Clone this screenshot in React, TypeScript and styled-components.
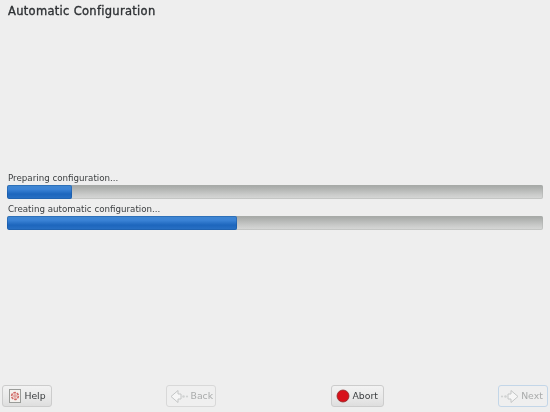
import React from 'react';
import styled, { createGlobalStyle } from 'styled-components';

const GlobalStyle = createGlobalStyle`
  html, body {
    margin: 0;
    padding: 0;
    background: #eeeeee;
  }
`;

const Screen = styled.div`
  width: 550px;
  height: 412px;
  display: flex;
  flex-direction: column;
  box-sizing: border-box;
  overflow: hidden;
  background: #eeeeee;
  font-family: "DejaVu Sans", sans-serif;
  color: #2e3436;
  filter: blur(0.3px);
`;

const Title = styled.h1`
  margin: 0;
  padding: 4px 0 0 8px;
  height: 20px;
  font-size: 11.5px;
  line-height: 15px;
  font-weight: 400;
  letter-spacing: 0.3px;
  -webkit-text-stroke: 0.35px #2e3134;
  color: #2e3134;
`;

const Content = styled.div`
  flex: 1;
  display: flex;
  flex-direction: column;
  justify-content: center;
  padding: 0 7px 0 7px;
  margin-bottom: 5px;
`;

const Label = styled.div`
  font-size: 8.7px;
  line-height: 14px;
  height: 13px;
  padding-left: 1px;
  color: #3a3d3f;
`;

const Track = styled.div`
  height: 14px;
  margin: 1px 0 3px;
  border-radius: 2px;
  overflow: hidden;
  background: linear-gradient(#a3a6a4, #b4b6b4 30%, #cbcccb 70%, #d8d9d8);
  box-shadow: inset 0 0 0 1px rgba(170, 172, 170, 0.4);
`;

const Fill = styled.div`
  height: 100%;
  border-radius: 2px;
  background: linear-gradient(#3f86cf, #3b83d6 30%, #1d66bd 65%, #2a71c4);
  box-shadow: inset 0 0 0 1px rgba(20, 80, 150, 0.4);
`;

const Footer = styled.div`
  display: flex;
  justify-content: space-between;
  align-items: center;
  height: 22px;
  padding: 0 2px;
  margin-bottom: 5px;
`;

const Button = styled.div<{ $disabled?: boolean; $focused?: boolean; $width: number; $endPad?: number }>`
  width: ${p => p.$width}px;
  height: 22px;
  box-sizing: border-box;
  display: flex;
  align-items: center;
  justify-content: center;
  gap: 2px;
  padding-right: ${p => p.$endPad ?? 0}px;
  font-size: 9.3px;
  border-radius: 3px;
  border: 1px solid ${p => (p.$focused ? '#c3d6e8' : p.$disabled ? '#d8d8d8' : '#cccccc')};
  color: ${p => (p.$disabled ? '#a9abab' : '#3a3d3f')};
  background: ${p =>
    p.$disabled ? '#efefef' : 'linear-gradient(#f2f2f2, #e8e8e8 60%, #dedede)'};
`;

const ButtonText = styled.span`
  margin-bottom: 1px;
`;

const HelpIcon = () => (
  <svg width="14" height="16" viewBox="0 0 14 16">
    <rect x="1.5" y="1.5" width="11" height="13" fill="#f4f1ee" stroke="#9a9c99" />
    <circle cx="7" cy="8" r="3.4" fill="#f0d8d4" stroke="#d06a66" strokeWidth="1.5" strokeDasharray="2.5 1" />
    <circle cx="7" cy="8" r="1.2" fill="#f4e4e0" stroke="#c75a55" strokeWidth="0.6" />
  </svg>
);

const BackIcon = () => (
  <svg width="19" height="15" viewBox="0 0 19 15">
    <path d="M1 7.5 L8 1.5 V5 H11 V10 H8 V13.5 Z" fill="#f6f6f6" stroke="#c4c6c6" />
    <circle cx="13.5" cy="7.5" r="1.3" fill="#d0d2d2" />
    <circle cx="17" cy="7.5" r="1.1" fill="#d0d2d2" />
  </svg>
);

const NextIcon = () => (
  <svg width="19" height="15" viewBox="0 0 19 15">
    <circle cx="2" cy="7.5" r="1.1" fill="#d0d2d2" />
    <circle cx="5.5" cy="7.5" r="1.3" fill="#d0d2d2" />
    <path d="M18 7.5 L11 1.5 V5 H8 V10 H11 V13.5 Z" fill="#f6f6f6" stroke="#c4c6c6" />
  </svg>
);

const AbortIcon = () => (
  <svg width="14" height="14" viewBox="0 0 14 14">
    <circle cx="7" cy="7" r="6" fill="#d8101a" stroke="#8e2a2a" strokeWidth="0.8" />
  </svg>
);

const bars = [
  { label: 'Preparing configuration...', percent: 12.1 },
  { label: 'Creating automatic configuration...', percent: 42.9 },
];

export default function App() {
  return (
    <Screen>
      <GlobalStyle />
      <Title>Automatic Configuration</Title>
      <Content>
        {bars.map(bar => (
          <div key={bar.label}>
            <Label>{bar.label}</Label>
            <Track>
              <Fill style={{ width: `${bar.percent}%` }} />
            </Track>
          </div>
        ))}
      </Content>
      <Footer>
        <Button $width={50}><HelpIcon /><ButtonText>Help</ButtonText></Button>
        <Button $width={50} $disabled><BackIcon /><ButtonText>Back</ButtonText></Button>
        <Button $width={53}><AbortIcon /><ButtonText>Abort</ButtonText></Button>
        <Button $width={50} $disabled $focused $endPad={3}><NextIcon /><ButtonText>Next</ButtonText></Button>
      </Footer>
    </Screen>
  );
}
